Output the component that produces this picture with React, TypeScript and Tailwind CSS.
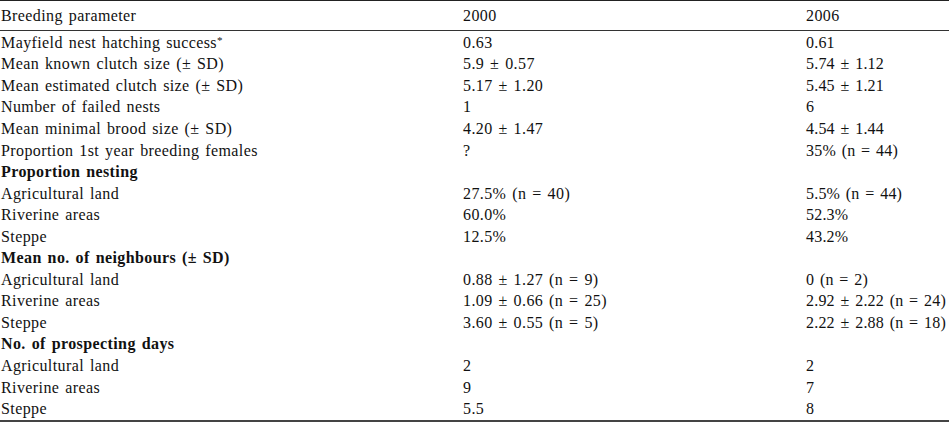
type Row = { label: string; a?: string; b?: string; head?: boolean };

const rows: Row[] = [
  { label: "Mayfield nest hatching success*", a: "0.63", b: "0.61" },
  { label: "Mean known clutch size (± SD)", a: "5.9 ± 0.57", b: "5.74 ± 1.12" },
  { label: "Mean estimated clutch size (± SD)", a: "5.17 ± 1.20", b: "5.45 ± 1.21" },
  { label: "Number of failed nests", a: "1", b: "6" },
  { label: "Mean minimal brood size (± SD)", a: "4.20 ± 1.47", b: "4.54 ± 1.44" },
  { label: "Proportion 1st year breeding females", a: "?", b: "35% (n = 44)" },
  { label: "Proportion nesting", head: true },
  { label: "Agricultural land", a: "27.5% (n = 40)", b: "5.5% (n = 44)" },
  { label: "Riverine areas", a: "60.0%", b: "52.3%" },
  { label: "Steppe", a: "12.5%", b: "43.2%" },
  { label: "Mean no. of neighbours (± SD)", head: true },
  { label: "Agricultural land", a: "0.88 ± 1.27 (n = 9)", b: "0 (n = 2)" },
  { label: "Riverine areas", a: "1.09 ± 0.66 (n = 25)", b: "2.92 ± 2.22 (n = 24)" },
  { label: "Steppe", a: "3.60 ± 0.55 (n = 5)", b: "2.22 ± 2.88 (n = 18)" },
  { label: "No. of prospecting days", head: true },
  { label: "Agricultural land", a: "2", b: "2" },
  { label: "Riverine areas", a: "9", b: "7" },
  { label: "Steppe", a: "5.5", b: "8" },
];

function Label({ text }: { text: string }) {
  // asterisk sits raised and small in the source table
  if (text.endsWith("*")) {
    return (
      <>
        {text.slice(0, -1)}
        <span className="text-[11px] relative -top-[4px]">*</span>
      </>
    );
  }
  return <>{text}</>;
}

export default function App() {
  return (
    <div className="w-[949px] h-[424px] bg-white text-[#111] font-['Liberation_Serif',serif] text-[16px] leading-none tracking-[0.4px] [word-spacing:1.5px] whitespace-nowrap">
      <div className="border-t border-[#222] border-b-[1.5px] border-b-[#333] grid grid-cols-[462px_343px_1fr] h-[31px] items-center pl-[1px]">
        <span>Breeding parameter</span>
        <span>2000</span>
        <span>2006</span>
      </div>
      <div className="pt-[1px] border-b-2 border-[#444]">
        {rows.map((r, i) => (
          <div key={i} className="grid grid-cols-[462px_343px_1fr] h-[21.55px] items-center pl-[1px]">
            <span className={r.head ? "font-bold" : ""}>
              <Label text={r.label} />
            </span>
            <span>{r.a}</span>
            <span className="tracking-[0.2px]">{r.b}</span>
          </div>
        ))}
      </div>
    </div>
  );
}
